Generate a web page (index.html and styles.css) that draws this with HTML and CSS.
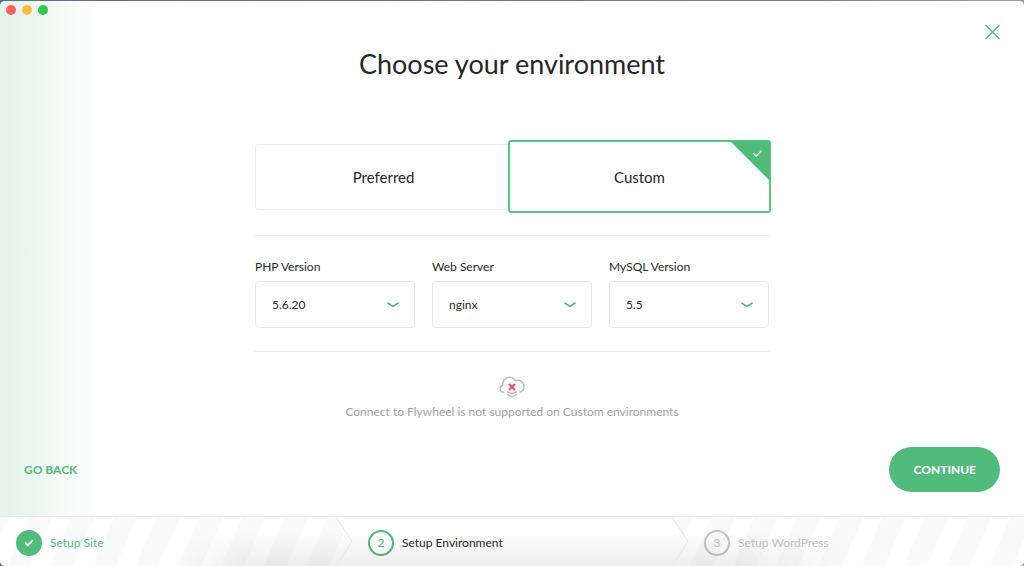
FILE: index.html
```html
<!DOCTYPE html>
<html lang="en">
<head>
<meta charset="utf-8">
<meta name="viewport" content="width=device-width, initial-scale=1">
<title>Choose your environment</title>
<link rel="stylesheet" href="styles.css">
</head>
<body>
<div class="window">
  <div class="titlebar">
    <button class="light light-close" type="button" aria-label="Close window"></button>
    <button class="light light-minimize" type="button" aria-label="Minimize window"></button>
    <button class="light light-zoom" type="button" aria-label="Zoom window"></button>
  </div>

  <main class="main">
    <button class="dismiss" type="button" aria-label="Cancel">
      <svg viewBox="0 0 16 16" width="16" height="16"><path d="M2 1.500l13 13M15 1.500l-13 13"/></svg>
    </button>
    <h1 class="title">Choose your environment</h1>

    <form class="form" id="environment">
      <div class="choices" role="radiogroup" aria-label="Environment">
        <label class="choice">
          <input class="choice-input" type="radio" name="env" value="preferred">
          <span>Preferred</span>
        </label>
        <label class="choice choice-selected">
          <input class="choice-input" type="radio" name="env" value="custom" checked>
          <span>Custom</span>
          <svg class="corner" viewBox="0 0 40 40" width="40" height="40">
            <path class="corner-fill" d="M0 0h40v40z"/>
            <path class="corner-check" d="M23.500 12.500l2.700 2.700 5-5.400"/>
          </svg>
        </label>
      </div>

      <div class="fields">
        <div class="field">
          <label class="field-label" for="php">PHP Version</label>
          <div class="select-box">
            <select class="select" id="php"><option>5.6.20</option></select>
            <svg class="arrow" viewBox="0 0 12 6" width="12" height="6"><path d="M1 1.200L5.200 3.900Q6 4.300 6.800 3.900L11 1.200"/></svg>
          </div>
        </div>
        <div class="field">
          <label class="field-label" for="server">Web Server</label>
          <div class="select-box">
            <select class="select" id="server"><option>nginx</option></select>
            <svg class="arrow" viewBox="0 0 12 6" width="12" height="6"><path d="M1 1.200L5.200 3.900Q6 4.300 6.800 3.900L11 1.200"/></svg>
          </div>
        </div>
        <div class="field">
          <label class="field-label" for="mysql">MySQL Version</label>
          <div class="select-box">
            <select class="select" id="mysql"><option>5.5</option></select>
            <svg class="arrow" viewBox="0 0 12 6" width="12" height="6"><path d="M1 1.200L5.200 3.900Q6 4.300 6.800 3.900L11 1.200"/></svg>
          </div>
        </div>
      </div>

      <div class="notice">
        <svg class="cloud" viewBox="0 0 26 22" width="26" height="22">
          <path d="M4.500 16.300C.2 16.200-.2 10.600 3.700 9.500 3.300 4.800 6.600 1.200 10.400 1.200c2.900 0 4.900 1.300 6 3.400 4.700-1 8.600 1.500 8.600 5.700 0 2.800-1.500 5-4.100 5.700"/>
          <path d="M8.300 16c1.800 0 2.800 1.500 4.700 1.500s2.900-1.500 4.700-1.500M8.300 18.800c1.800 0 2.800 1.900 4.700 1.900s2.900-1.900 4.700-1.900"/>
          <path class="cloud-x" d="M10 8l6 6M16 8l-6 6"/>
        </svg>
        <p class="notice-text">Connect to Flywheel is not supported on Custom environments</p>
      </div>
    </form>

    <div class="actions">
      <button class="back" type="button">GO BACK</button>
      <button class="continue" type="submit" form="environment">CONTINUE</button>
    </div>
  </main>

  <ol class="steps">
    <li class="step step-done">
      <span class="badge"><svg viewBox="0 0 10 8" width="10" height="8"><path d="M1.500 4l2.300 2.300L8.500 1.500"/></svg></span>
      <span>Setup Site</span>
      <svg class="chevron" viewBox="0 0 17 50" preserveAspectRatio="none"><path d="M0 0l16 25L0 50"/></svg>
    </li>
    <li class="step step-current" aria-current="step">
      <span class="badge">2</span>
      <span>Setup Environment</span>
      <svg class="chevron" viewBox="0 0 17 50" preserveAspectRatio="none"><path d="M0 0l16 25L0 50"/></svg>
    </li>
    <li class="step step-next">
      <span class="badge">3</span>
      <span>Setup WordPress</span>
    </li>
  </ol>
</div>
</body>
</html>
```

FILE: styles.css
```css
* {
  box-sizing: border-box;
}

body {
  margin: 0;
  background: linear-gradient(90deg, #5f6f86, #6d7178 35%, #7c7f88 80%, #9a9ea8);
  color: #262727;
  font-family: Lato, "Open Sans", sans-serif;
}

button,
select {
  font: inherit;
  color: inherit;
  border: 0;
  padding: 0;
  background: none;
  cursor: pointer;
}

svg {
  display: block;
  fill: none;
  stroke-linecap: round;
  stroke-linejoin: round;
}

.window {
  display: flex;
  flex-direction: column;
  min-height: 100vh;
  border-top: 1px solid transparent;
  border-radius: 5px;
  overflow: hidden;
  background: linear-gradient(90deg, #e3f4ea 0, #eaf5ef 28px, #f6fbf8 66px, #fff 104px) padding-box;
}

.titlebar {
  display: flex;
  gap: 6px;
  padding: 4px 6px 0;
}

.light {
  width: 10px;
  height: 10px;
  border-radius: 50%;
}

.light-close { background: #fc605c; }
.light-minimize { background: #fdbc40; }
.light-zoom { background: #34c84a; }

.main {
  flex: 1;
  display: flex;
  flex-direction: column;
  padding: 9px 24px 24px;
}

.dismiss {
  align-self: flex-end;
}

.dismiss svg {
  stroke: #51bb7b;
  stroke-width: 1.5;
}

.title {
  margin: 6px 0 62px;
  font-size: 27px;
  line-height: 36px;
  font-weight: 400;
  text-align: center;
}

.form {
  width: 100%;
  max-width: 514px;
  margin: 0 auto;
}

.choices {
  display: grid;
  grid-template-columns: 1fr 1fr;
  margin-bottom: 25px;
}

.choice {
  position: relative;
  display: flex;
  align-items: center;
  justify-content: center;
  height: 66px;
  border: 1px solid #ebebeb;
  border-radius: 3px;
  font-size: 15px;
  line-height: 20px;
  cursor: pointer;
}

.choice-selected {
  height: 73px;
  margin: -4px -2px -3px -4px;
  border: 2px solid #5dc389;
  background: #fff;
}

.choice-input {
  position: absolute;
  opacity: 0;
}

.corner {
  position: absolute;
  top: -1px;
  right: -1px;
}

.corner-fill {
  fill: #51bb7b;
}

.corner-check {
  stroke: #fff;
  stroke-width: 1.2;
}

.fields {
  display: grid;
  grid-template-columns: repeat(3, 1fr);
  gap: 17px;
  padding: 23px 0;
  border: solid #ebebeb;
  border-width: 1px 0;
}

.field-label {
  display: block;
  margin-bottom: 6px;
  font-size: 12px;
  line-height: 16px;
}

.select-box {
  display: grid;
  align-items: center;
}

.select {
  grid-area: 1 / 1;
  width: 100%;
  height: 47px;
  padding: 0 40px 0 16px;
  border: 1px solid #e9e9e9;
  border-radius: 4px;
  background: #fff;
  font-size: 12px;
  appearance: none;
}

.arrow {
  grid-area: 1 / 1;
  justify-self: end;
  margin-right: 16px;
  stroke: #51bb7b;
  stroke-width: 1.7;
  pointer-events: none;
}

.notice {
  display: flex;
  flex-direction: column;
  align-items: center;
  gap: 6px;
  padding-top: 24px;
}

.cloud {
  stroke: #bfbfbf;
  stroke-width: 1.5;
}

.cloud-x {
  stroke: #f0475f;
  stroke-width: 2;
  stroke-linecap: butt;
}

.notice-text {
  margin: 0;
  color: #a2a2a2;
  font-size: 12px;
  line-height: 16px;
}

.actions {
  display: flex;
  align-items: center;
  justify-content: space-between;
  margin-top: auto;
}

.back,
.continue {
  font-size: 12px;
  line-height: 15px;
  font-weight: 700;
}

.back {
  color: #51bb7b;
}

.continue {
  padding: 15px 24px;
  border-radius: 23px;
  background: #51bb7b;
  color: #fff;
}

.steps {
  position: relative;
  display: grid;
  grid-template-columns: 21fr 21fr 22fr;
  height: 50px;
  margin: 0;
  padding: 0;
  list-style: none;
  border-top: 1px solid #e9e9e9;
  background: repeating-linear-gradient(114deg, #fafafa 0, #fafafa 8px, #fff 9px, #fff 26px, #fafafa 27px, #fafafa 39px);
}

.steps::after {
  content: "";
  position: absolute;
  inset: 0;
  background: linear-gradient(transparent 30%, rgba(0, 0, 0, 0.07));
  mask-image: linear-gradient(100deg, transparent 17%, #000 25%, #000 72%, transparent 84%);
  pointer-events: none;
}

.step {
  position: relative;
  display: flex;
  align-items: center;
  gap: 8px;
  padding: 3px 0 0 32px;
  font-size: 12px;
  line-height: 16px;
}

.step-done {
  padding-left: 16px;
  color: #51bb7b;
}

.step-current::before {
  content: "";
  position: absolute;
  inset: 0 -16px 0 0;
  background: #fff;
  clip-path: polygon(0 0, calc(100% - 16px) 0, 100% 50%, calc(100% - 16px) 100%, 0 100%, 16px 50%);
}

.step-current span {
  position: relative;
}

.step-next {
  color: #c4c4c4;
}

.badge {
  display: flex;
  align-items: center;
  justify-content: center;
  width: 26px;
  height: 26px;
  border: 2px solid #c4c4c4;
  border-radius: 50%;
}

.step-done .badge {
  border-color: #51bb7b;
  background: #51bb7b;
}

.step-done .badge svg {
  stroke: #fff;
  stroke-width: 1.7;
}

.step-current .badge {
  border-color: #51bb7b;
  color: #51bb7b;
}

.chevron {
  position: absolute;
  z-index: 1;
  top: 0;
  left: 100%;
  width: 17px;
  height: 100%;
  stroke: #e6e6e6;
  stroke-width: 1;
}
```
